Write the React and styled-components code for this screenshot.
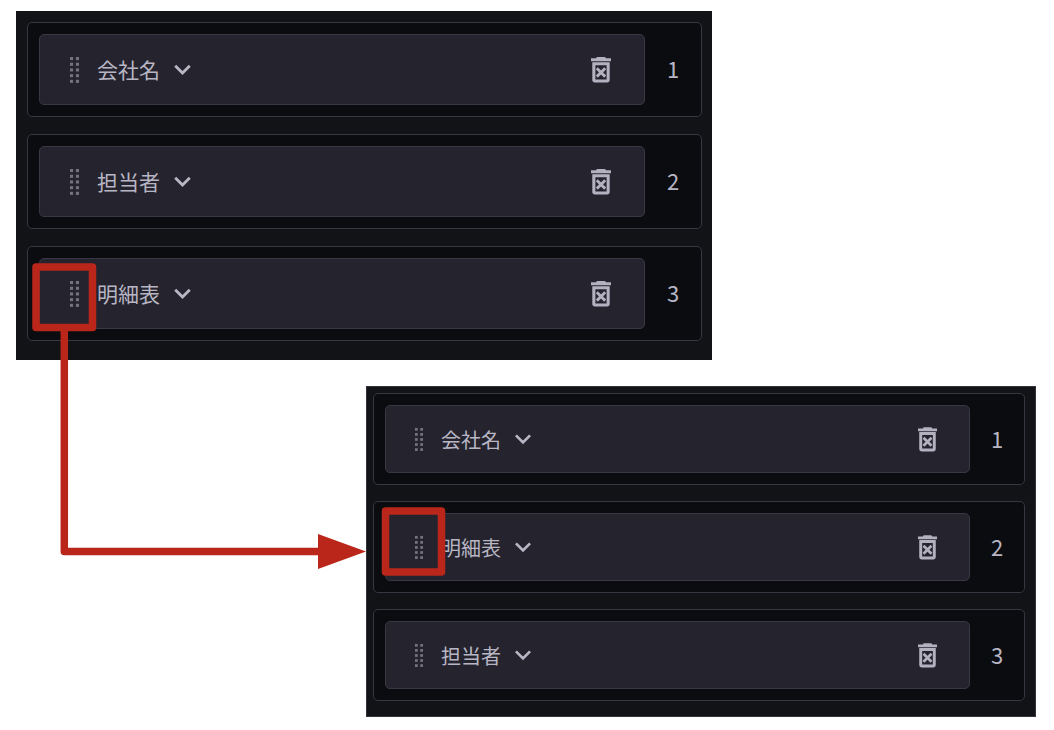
import React from "react";
import styled, { createGlobalStyle } from "styled-components";

const GlobalStyle = createGlobalStyle`
  * {
    box-sizing: border-box;
  }
  body {
    margin: 0;
    background: #ffffff;
    font-family: "Noto Sans CJK JP", sans-serif;
  }
`;

// before / after the drag
const large = {
  margin: "11px 342px 0 16px",
  padding: "11px 10px 19px 11px",
  border: "none",
  gap: 17,
  card: 71,
  font: 21,
  order: 56,
  chevron: 33,
  dots: [9, 26],
  trash: [20, 26],
  start: 30,
  end: 33,
  space: 18,
};

const small = {
  margin: "26px 18px 0 366px",
  padding: "6px 10px 15px 6px",
  border: "1px solid #33343a",
  gap: 16,
  card: 68,
  font: 20,
  order: 54,
  chevron: 32,
  dots: [8, 25],
  trash: [19, 25],
  start: 29,
  end: 32,
  space: 18,
};

const before = ["会社名", "担当者", "明細表"];
const after = ["会社名", "明細表", "担当者"];

function DotsIcon({ size }) {
  return (
    <svg width={size[0]} height={size[1]} viewBox="0 0 9 26" fill="#73727e" aria-hidden="true">
      {[0, 5.7, 11.4, 17.1, 22.8].map((y) => (
        <React.Fragment key={y}>
          <rect x="0" y={y} width="3.1" height="3.1" />
          <rect x="5.9" y={y} width="3.1" height="3.1" />
        </React.Fragment>
      ))}
    </svg>
  );
}

function ChevronIcon({ size }) {
  return (
    <svg width={size} height={size} viewBox="0 0 24 24" fill="currentColor" aria-hidden="true">
      <path d="M16.59 8.59 12 13.17 7.41 8.59 6 10l6 6 6-6z" />
    </svg>
  );
}

function TrashIcon({ size }) {
  return (
    <svg width={size[0]} height={size[1]} viewBox="0 0 20 26" aria-hidden="true">
      <path d="M6 0h8l1 1.3h5V4.2H0V1.3h5z" fill="currentColor" />
      <path
        fill="currentColor"
        fillRule="evenodd"
        d="M1.3 5.2h17.4v17.6a2.7 2.7 0 0 1-2.7 2.7H4a2.7 2.7 0 0 1-2.7-2.7zM4.4 8.3v14.1h11.2V8.3z"
      />
      <path d="M5.8 11.2l8.4 8.4M14.2 11.2l-8.4 8.4" stroke="currentColor" strokeWidth="2.9" />
    </svg>
  );
}

function FieldList({ names, size, label }) {
  return (
    <Panel $size={size} aria-label={label}>
      {names.map((name, i) => (
        <Row key={name}>
          <Card $size={size}>
            <IconButton type="button" aria-label={`${name} を移動`}>
              <DotsIcon size={size.dots} />
            </IconButton>
            <NameButton type="button" $size={size}>
              {name}
              <ChevronIcon size={size.chevron} />
            </NameButton>
            <IconButton type="button" aria-label={`${name} を削除`}>
              <TrashIcon size={size.trash} />
            </IconButton>
          </Card>
          <Order $size={size}>{i + 1}</Order>
        </Row>
      ))}
    </Panel>
  );
}

function App() {
  return (
    <Page>
      <GlobalStyle />
      <FieldList names={before} size={large} label="移動前" />
      <FieldList names={after} size={small} label="移動後" />
      <Marks width="460" height="600" viewBox="0 0 460 600" aria-hidden="true">
        <rect x="36" y="267" width="56.5" height="60.5" />
        <rect x="385.5" y="511" width="56" height="61" />
        <path d="M64.3 328V551.5H320" />
        <Head d="M318 534L366 551.5L318 569z" />
      </Marks>
    </Page>
  );
}

const Page = styled.main`
  position: relative;
  display: flow-root;
`;

const Panel = styled.ol`
  list-style: none;
  display: flex;
  flex-direction: column;
  gap: ${({ $size }) => $size.gap}px;
  margin: ${({ $size }) => $size.margin};
  padding: ${({ $size }) => $size.padding};
  border: ${({ $size }) => $size.border};
  background: #121317;
`;

const Row = styled.li`
  display: flex;
  align-items: center;
  padding: 11px 0 11px 11px;
  border: 1px solid #373641;
  border-radius: 5px;
  background: #0b0c10;
`;

const Card = styled.div`
  flex: 1;
  display: flex;
  align-items: center;
  height: ${({ $size }) => $size.card}px;
  padding: 0 ${({ $size }) => $size.end}px 0 ${({ $size }) => $size.start}px;
  border: 1px solid #383743;
  border-radius: 5px;
  background: #25242e;
`;

const IconButton = styled.button`
  display: flex;
  padding: 0;
  border: none;
  background: none;
  color: #b3b1bf;
  cursor: pointer;
`;

const NameButton = styled.button`
  display: flex;
  align-items: center;
  gap: 6px;
  margin-left: ${({ $size }) => $size.space}px;
  margin-right: auto;
  padding: 0;
  border: none;
  background: none;
  color: #b8b6c4;
  font-family: inherit;
  font-size: ${({ $size }) => $size.font}px;
  line-height: 31px;
  cursor: pointer;
`;

const Order = styled.span`
  width: ${({ $size }) => $size.order}px;
  padding-bottom: 2px;
  text-align: center;
  color: #b8b6c4;
  font-size: 22px;
  line-height: 31px;
`;

const Marks = styled.svg`
  position: absolute;
  top: 0;
  left: 0;
  pointer-events: none;
  fill: none;
  stroke: #ba271a;
  stroke-width: 7.5;
  stroke-linejoin: round;
`;

const Head = styled.path`
  fill: #ba271a;
  stroke: none;
`;

export default App;
